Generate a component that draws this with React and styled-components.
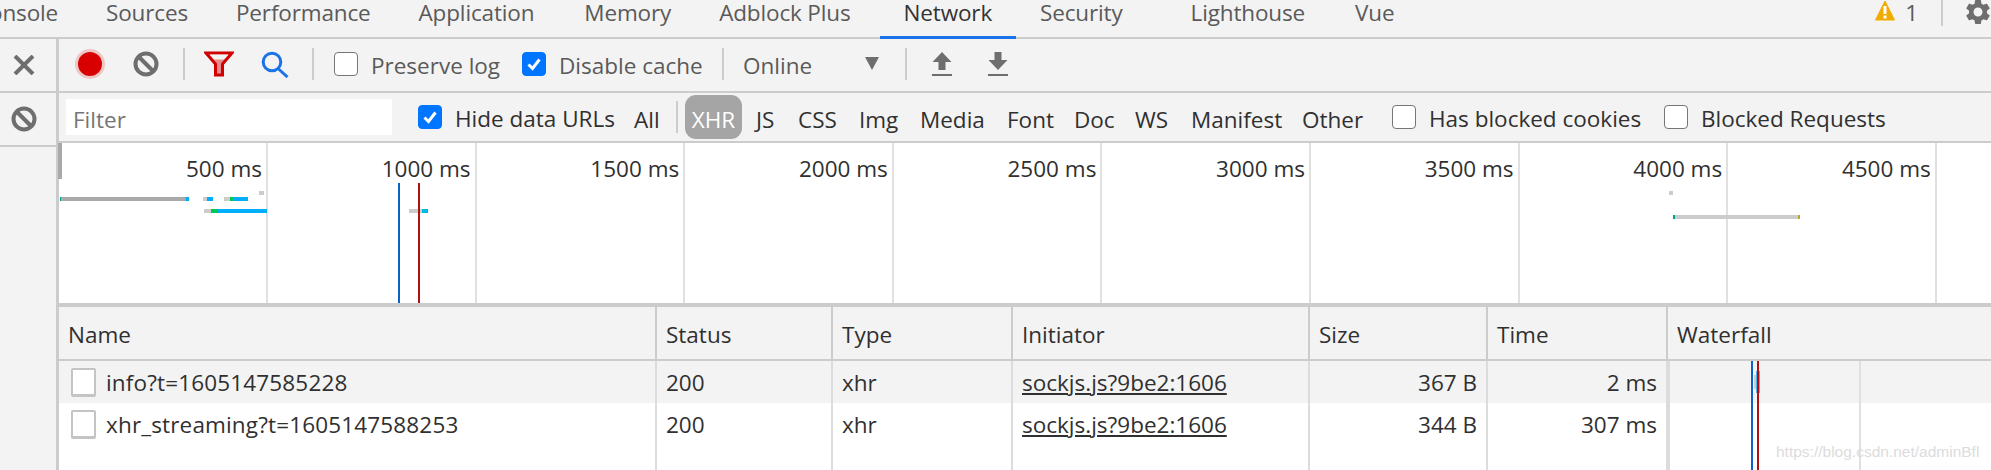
import React from "react";
import styled, { createGlobalStyle } from "styled-components";
import { MdSettings } from "react-icons/md";

const GlobalStyle = createGlobalStyle`
  html, body {
    margin: 0;
    padding: 0;
    background: #fff;
  }
  body {
    font-family: "Open Sans", "Noto Sans", sans-serif;
    font-size: 22.5px;
    color: #303030;
  }
`;

const Page = styled.div`
  width: 1991px;
  height: 470px;
  display: flex;
  flex-flow: column;
  overflow: hidden;
  position: relative;
`;

const TabBar = styled.div`
  display: flex;
  flex: none;
  height: 39px;
  box-sizing: border-box;
  align-items: stretch;
  background: #f3f3f3;
  border-bottom: 2px solid #ccc;
`;

const Tab = styled.div`
  display: flex;
  align-items: flex-start;
  flex: none;
  height: 39px;
  box-sizing: border-box;
  padding: 0 24px;
  color: ${p => (p.$active ? "#333" : "#5a5a5a")};
  border-bottom: 3px solid ${p => (p.$active ? "#1a73e8" : "transparent")};
  margin-left: ${p => p.$ml || 0}px;
  white-space: nowrap;
  line-height: 26px;
  letter-spacing: -0.15px;
`;

const TabRight = styled.div`
  display: flex;
  align-items: flex-start;
  margin-left: auto;
  height: 37px;
  color: #5a5a5a;
`;

const WarnCount = styled.span`
  margin: 0 23px 0 10px;
  line-height: 26px;
`;

const TabDivider = styled.div`
  width: 2px;
  height: 26px;
  background: #ccc;
  margin-right: 22px;
`;

const GearSlot = styled.div`
  width: 26px;
  height: 26px;
  margin-top: -1px;
  color: #6e6e6e;
  font-size: 30px;
  line-height: 0;
  svg {
    margin: -2px;
  }
`;

const Body = styled.div`
  display: flex;
  flex: 1;
  min-height: 0;
`;

const Rail = styled.div`
  flex: none;
  width: 59px;
  box-sizing: border-box;
  background: #f3f3f3;
  border-right: 3px solid #ccc;
`;

const RailCell = styled.div`
  display: flex;
  align-items: center;
  justify-content: center;
  box-sizing: border-box;
  height: ${p => p.$h}px;
  padding-right: 8px;
  border-bottom: 2px solid #ccc;
`;

const Main = styled.div`
  flex: 1;
  min-width: 0;
  display: flex;
  flex-flow: column;
`;

const Toolbar = styled.div`
  display: flex;
  flex: none;
  align-items: center;
  height: 54px;
  box-sizing: border-box;
  padding-left: 3px;
  padding-bottom: 2px;
  background: #f3f3f3;
  border-bottom: 2px solid #ccc;
  color: #5a5a5a;
`;

const ToolButton = styled.div`
  flex: none;
  width: 56px;
  height: 34px;
  display: flex;
  align-items: center;
  justify-content: center;
`;

const Sep = styled.div`
  flex: none;
  width: 2px;
  height: ${p => p.$h || 32}px;
  margin-left: ${p => p.$l || 0}px;
  margin-right: ${p => p.$r || 0}px;
  background: #ccc;
`;

const CheckLabel = styled.div`
  flex: none;
  display: flex;
  align-items: center;
  gap: 13px;
  width: ${p => p.$w}px;
  height: 34px;
  margin-left: ${p => p.$ml || 0}px;
  white-space: nowrap;
`;

const LabelText = styled.span`
  line-height: 34px;
  padding-top: 3px;
`;

const Box = styled.span`
  flex: none;
  width: 24px;
  height: 24px;
  box-sizing: border-box;
  display: flex;
  align-items: center;
  justify-content: center;
  border-radius: 4px;
  border: 1px solid ${p => (p.$checked ? "#0075ff" : "#767676")};
  background: ${p => (p.$checked ? "#0075ff" : "#fff")};
`;

const Throttle = styled.div`
  flex: none;
  width: 162px;
  display: flex;
  align-items: center;
  justify-content: space-between;
  padding-right: 26px;
  box-sizing: border-box;
`;

const Caret = styled.span`
  width: 0;
  height: 0;
  margin-top: -2px;
  border-left: 7px solid transparent;
  border-right: 7px solid transparent;
  border-top: 13px solid #6e6e6e;
`;

const FilterBar = styled.div`
  display: flex;
  flex: none;
  align-items: center;
  height: 50px;
  box-sizing: border-box;
  background: #f3f3f3;
  border-bottom: 2px solid #ccc;
  padding-left: 7px;
`;

const FilterInput = styled.div`
  flex: none;
  width: 326px;
  height: 36px;
  margin-right: 26px;
  background: #fff;
  color: #757575;
  padding-left: 7px;
  box-sizing: border-box;
  line-height: 42px;
`;

const Chip = styled.div`
  flex: none;
  width: ${p => p.$w}px;
  height: 44px;
  line-height: 50px;
  box-sizing: border-box;
  white-space: nowrap;
  margin-left: ${p => p.$ml || 0}px;
  ${p =>
    p.$on &&
    `
    background: #a5a5a5;
    color: #fff;
    border-radius: 11px;
    text-align: center;
  `}
`;

const Overview = styled.div`
  position: relative;
  display: flex;
  flex: none;
  height: 164px;
  box-sizing: border-box;
  background: #fff;
  border-bottom: 4px solid #ccc;
`;

const OverviewCell = styled.div`
  flex: ${p => (p.$rest ? "1" : "none")};
  width: ${p => p.$w}px;
  box-sizing: border-box;
  padding: 11px 4px 0 0;
  text-align: right;
  line-height: 30px;
  white-space: nowrap;
  border-right: ${p => (p.$rest ? "none" : "2px solid #e0e0e0")};
`;

const Handle = styled.div`
  position: absolute;
  left: -1px;
  top: 0;
  width: 4px;
  height: 36px;
  background: #a9a9a9;
`;

const Chart = styled.svg`
  position: absolute;
  left: 0;
  top: 0;
  width: 1932px;
  height: 160px;
`;

const Table = styled.div`
  position: relative;
  flex: 1;
  min-height: 0;
  display: flex;
  flex-flow: column;
`;

const Row = styled.div`
  display: grid;
  grid-template-columns: 598px 176px 180px 297px 178px 180px 1fr;
  flex: ${p => (p.$fill ? "1" : "none")};
  height: ${p => (p.$fill ? "auto" : `${p.$h}px`)};
  box-sizing: border-box;
  background: ${p => (p.$grey ? "#f3f3f3" : "#fff")};
  border-bottom: ${p => (p.$head ? "2px solid #ccc" : "none")};
`;

const Cell = styled.div`
  display: flex;
  align-items: center;
  gap: 10px;
  min-width: 0;
  box-sizing: border-box;
  padding: ${p => (p.$head ? "2px" : "0")} 9px 0;
  white-space: nowrap;
  letter-spacing: ${p => (p.$digits ? "0.15px" : "0")};
  justify-content: ${p => (p.$right ? "flex-end" : "flex-start")};
  border-right: 2px solid ${p => (p.$head ? "#ccc" : "#dcdcdc")};
  &:last-child {
    border-right: none;
  }
`;

const FileIcon = styled.span`
  flex: none;
  width: 25px;
  height: 29px;
  margin-left: 3px;
  box-sizing: border-box;
  background: #fff;
  border: 2px solid #c4c4c4;
  border-bottom-width: 3px;
  border-radius: 2px;
`;

const SourceLink = styled.span`
  text-decoration: underline;
`;

const WaterfallMarks = styled.svg`
  position: absolute;
  left: 1609px;
  top: 54px;
  width: 323px;
  height: 109px;
`;

const Watermark = styled.div`
  position: absolute;
  left: 1717px;
  top: 135px;
  font-family: "Liberation Sans", sans-serif;
  font-size: 15.5px;
  line-height: 20px;
  color: #dcdcdc;
  white-space: nowrap;
`;

const tabs = [
  { name: "Console", ml: -49 },
  { name: "Sources" },
  { name: "Performance" },
  { name: "Application" },
  { name: "Memory", ml: 2 },
  { name: "Adblock Plus" },
  { name: "Network", ml: 5, active: true },
  { name: "Security" },
  { name: "Lighthouse", ml: 20 },
  { name: "Vue", ml: 2 },
];

const filterTypes = [
  { name: "JS", w: 42, ml: 14 },
  { name: "CSS", w: 61 },
  { name: "Img", w: 61 },
  { name: "Media", w: 87 },
  { name: "Font", w: 67 },
  { name: "Doc", w: 61 },
  { name: "WS", w: 56 },
  { name: "Manifest", w: 111 },
  { name: "Other", w: 90 },
];

const overviewLabels = ["500", "1000", "1500", "2000", "2500", "3000", "3500", "4000", "4500"];

const columns = ["Name", "Status", "Type", "Initiator", "Size", "Time", "Waterfall"];

const requests = [
  { name: "info?t=1605147585228", size: "367 B", time: "2 ms", grey: true },
  { name: "xhr_streaming?t=1605147588253", size: "344 B", time: "307 ms" },
];

// x, y, w, h, colour: taken straight from the timeline
const bars = [
  [60, 197, 125, 4, "#a9a9a9"],
  [60, 197, 1, 4, "#00a08a"],
  [185, 197, 1, 4, "#c8a030"],
  [186, 197, 3, 4, "#00aeff"],
  [203, 197, 4, 4, "#ccc"],
  [207, 197, 6, 4, "#00aeff"],
  [224, 197, 6, 4, "#ccc"],
  [230, 197, 3, 4, "#00c853"],
  [233, 197, 15, 4, "#00aeff"],
  [259, 191, 5, 4, "#ccc"],
  [204, 209, 7, 4, "#ccc"],
  [211, 209, 7, 4, "#00c853"],
  [218, 209, 49, 4, "#00aeff"],
  [409, 209, 13, 4, "#ccc"],
  [422, 209, 4, 4, "#00bcd4"],
  [426, 209, 2, 4, "#00aeff"],
  [1669, 191, 4, 4, "#ccc"],
  [1675, 215, 123, 4, "#ccc"],
  [1673, 215, 2, 4, "#00a08a"],
  [1798, 215, 2, 4, "#c8a030"],
];

const Check = () => (
  <svg width="16" height="16" viewBox="0 0 16 16">
    <path d="M2.5 8.5 6.5 12.5 13.5 3.5" fill="none" stroke="#fff" strokeWidth="3" />
  </svg>
);

const BlockIcon = () => (
  <svg width="28" height="28" viewBox="0 0 28 28">
    <circle cx="14" cy="14" r="10.5" fill="none" stroke="#6e6e6e" strokeWidth="4" />
    <path d="M7 7 21 21" stroke="#6e6e6e" strokeWidth="4" />
  </svg>
);

const CloseIcon = () => (
  <svg width="22" height="20" viewBox="0 0 22 20">
    <path d="M2 1 20 19M20 1 2 19" stroke="#6e6e6e" strokeWidth="4" />
  </svg>
);

const RecordIcon = () => (
  <svg width="34" height="34" viewBox="0 0 34 34">
    <circle cx="17" cy="17" r="15" fill="#e8a0a0" opacity="0.55" />
    <circle cx="17" cy="17" r="12" fill="#d80000" />
  </svg>
);

const FunnelIcon = () => (
  <svg width="30" height="26" viewBox="0 0 30 26">
    <path d="M2 2H28L18.5 13V24H11.5V13Z" fill="#e88a8a" stroke="#d00000" strokeWidth="3" />
    <path d="M5.5 3.5H24.5L20 8.5H10Z" fill="#f3f3f3" />
  </svg>
);

const SearchIcon = () => (
  <svg width="28" height="27" viewBox="0 0 28 27">
    <circle cx="11" cy="11" r="8.8" fill="none" stroke="#1a73e8" strokeWidth="3" />
    <path d="M17 17.5 26.5 26" stroke="#1a73e8" strokeWidth="3" />
  </svg>
);

const ArrowIcon = ({ down }) => (
  <svg width="20" height="24" viewBox="0 0 20 24">
    <path
      d={down ? "M6.5 0H13.5V8H19.5L10 18 .5 8H6.5Z" : "M10 0 19.5 10H13.5V18H6.5V10H.5Z"}
      fill="#6e6e6e"
    />
    <rect x="0" y="22" width="20" height="2" fill="#6e6e6e" />
  </svg>
);

const WarningIcon = () => (
  <svg width="20" height="21" viewBox="0 0 20 21">
    <path d="M10 1 19.5 20H.5Z" fill="#f2ab00" stroke="#f2ab00" strokeWidth="1" strokeLinejoin="round" />
    <rect x="8.5" y="6" width="3" height="8" fill="#fff" />
    <rect x="8.5" y="15.5" width="3" height="3" fill="#fff" />
  </svg>
);

const App = () => (
  <Page>
    <GlobalStyle />
    <TabBar>
      {tabs.map(t => (
        <Tab key={t.name} $active={t.active} $ml={t.ml}>
          {t.name}
        </Tab>
      ))}
      <TabRight>
        <WarningIcon />
        <WarnCount>1</WarnCount>
        <TabDivider />
        <GearSlot>
          <MdSettings />
        </GearSlot>
      </TabRight>
    </TabBar>
    <Body>
      <Rail>
        <RailCell $h={54}>
          <CloseIcon />
        </RailCell>
        <RailCell $h={54}>
          <BlockIcon />
        </RailCell>
      </Rail>
      <Main>
        <Toolbar>
          <ToolButton>
            <RecordIcon />
          </ToolButton>
          <ToolButton>
            <BlockIcon />
          </ToolButton>
          <Sep $l={9} $r={6} />
          <ToolButton>
            <FunnelIcon />
          </ToolButton>
          <ToolButton>
            <SearchIcon />
          </ToolButton>
          <Sep $l={9} $r={6} />
          <CheckLabel $w={188} $ml={14}>
            <Box />
            <LabelText>Preserve log</LabelText>
          </CheckLabel>
          <CheckLabel $w={200}>
            <Box $checked>
              <Check />
            </Box>
            <LabelText>Disable cache</LabelText>
          </CheckLabel>
          <Sep $r={19} />
          <Throttle>
            <LabelText>Online</LabelText>
            <Caret />
          </Throttle>
          <Sep $r={7} />
          <ToolButton>
            <ArrowIcon />
          </ToolButton>
          <ToolButton>
            <ArrowIcon down />
          </ToolButton>
        </Toolbar>
        <FilterBar>
          <FilterInput>Filter</FilterInput>
          <CheckLabel $w={216}>
            <Box $checked>
              <Check />
            </Box>
            <LabelText>Hide data URLs</LabelText>
          </CheckLabel>
          <Chip $w={42}>All</Chip>
          <Sep $r={7} />
          <Chip $w={57} $on>
            XHR
          </Chip>
          {filterTypes.map(f => (
            <Chip key={f.name} $w={f.w} $ml={f.ml}>
              {f.name}
            </Chip>
          ))}
          <CheckLabel $w={272}>
            <Box />
            <LabelText>Has blocked cookies</LabelText>
          </CheckLabel>
          <CheckLabel $w={240}>
            <Box />
            <LabelText>Blocked Requests</LabelText>
          </CheckLabel>
        </FilterBar>
        <Overview>
          {overviewLabels.map((ms, i) => (
            <OverviewCell key={ms} $w={i === 0 ? 209 : 208.6}>
              {ms} ms
            </OverviewCell>
          ))}
          <OverviewCell $rest />
          <Chart viewBox="59 143 1932 160" shapeRendering="crispEdges">
            {bars.map(([x, y, w, h, c], i) => (
              <rect key={i} x={x} y={y} width={w} height={h} fill={c} />
            ))}
            <rect x="398" y="183" width="2" height="120" fill="#0b63c9" />
            <rect x="418" y="183" width="2" height="120" fill="#b01010" />
          </Chart>
          <Handle />
        </Overview>
        <Table>
          <Row $head $h={54} $grey>
            {columns.map(c => (
              <Cell key={c} $head>
                {c}
              </Cell>
            ))}
          </Row>
          {requests.map(r => (
            <Row key={r.name} $h={42} $grey={r.grey}>
              <Cell $digits>
                <FileIcon />
                {r.name}
              </Cell>
              <Cell>200</Cell>
              <Cell>xhr</Cell>
              <Cell>
                <SourceLink>sockjs.js?9be2:1606</SourceLink>
              </Cell>
              <Cell $right>{r.size}</Cell>
              <Cell $right>{r.time}</Cell>
              <Cell />
            </Row>
          ))}
          <Row $fill>
            {columns.map(c => (
              <Cell key={c} />
            ))}
          </Row>
          <WaterfallMarks viewBox="1668 361 323 109" shapeRendering="crispEdges">
            <rect x="1668" y="361" width="2" height="109" fill="#dcdcdc" />
            <rect x="1859" y="361" width="2" height="109" fill="#e0e0e0" />
            <rect x="1754" y="375" width="2" height="14" fill="#cfcfcf" />
            <rect x="1756" y="371" width="4" height="22" fill="#4fb0f0" />
            <rect x="1751" y="361" width="2" height="109" fill="#0b63c9" />
            <rect x="1757" y="361" width="2" height="109" fill="#b01010" />
          </WaterfallMarks>
          <Watermark>https://blog.csdn.net/adminBfl</Watermark>
        </Table>
      </Main>
    </Body>
  </Page>
);

export default App;
